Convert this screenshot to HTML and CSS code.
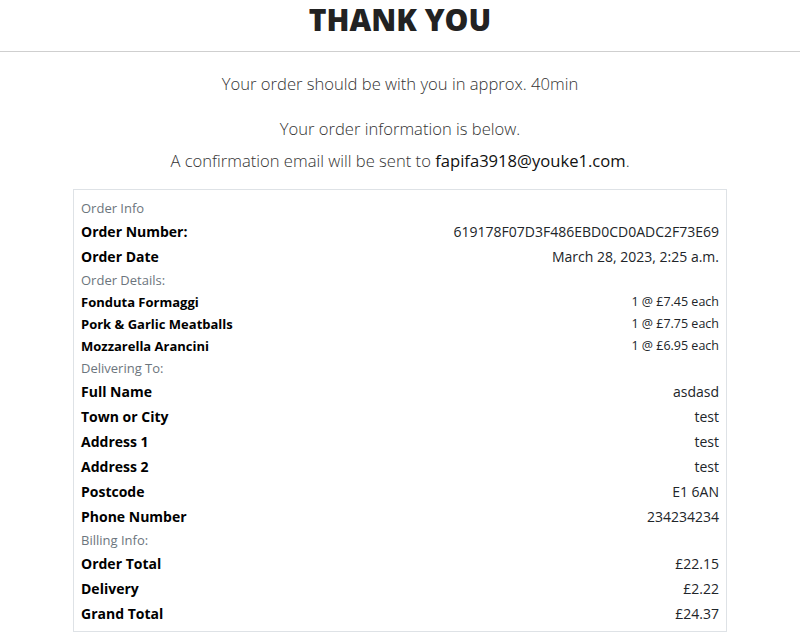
FILE: index.html
```
<!DOCTYPE html>
<html lang="en">
<head>
<meta charset="utf-8">
<title>Thank You</title>
<link rel="stylesheet" href="styles.css">
</head>
<body>
<header class="page-header">
  <h1 class="title">THANK YOU</h1>
</header>
<main class="content">
  <p class="eta">Your order should be with you in approx. 40min</p>
  <div class="info">
    <p>Your order information is below.</p>
    <p>A confirmation email will be sent to <strong class="email">fapifa3918@youke1.com</strong>.</p>
  </div>
  <section class="summary">
    <div class="section-label">Order Info</div>
    <div class="row"><span class="key">Order Number:</span><span class="val">619178F07D3F486EBD0CD0ADC2F73E69</span></div>
    <div class="row"><span class="key">Order Date</span><span class="val">March 28, 2023, 2:25 a.m.</span></div>
    <div class="section-label">Order Details:</div>
    <div class="row item"><span class="key">Fonduta Formaggi</span><span class="val">1 @ £7.45 each</span></div>
    <div class="row item"><span class="key">Pork &amp; Garlic Meatballs</span><span class="val">1 @ £7.75 each</span></div>
    <div class="row item"><span class="key">Mozzarella Arancini</span><span class="val">1 @ £6.95 each</span></div>
    <div class="section-label">Delivering To:</div>
    <div class="row"><span class="key">Full Name</span><span class="val">asdasd</span></div>
    <div class="row"><span class="key">Town or City</span><span class="val">test</span></div>
    <div class="row"><span class="key">Address 1</span><span class="val">test</span></div>
    <div class="row"><span class="key">Address 2</span><span class="val">test</span></div>
    <div class="row"><span class="key">Postcode</span><span class="val">E1 6AN</span></div>
    <div class="row"><span class="key">Phone Number</span><span class="val">234234234</span></div>
    <div class="section-label">Billing Info:</div>
    <div class="row"><span class="key">Order Total</span><span class="val">£22.15</span></div>
    <div class="row"><span class="key">Delivery</span><span class="val">£2.22</span></div>
    <div class="row"><span class="key">Grand Total</span><span class="val">£24.37</span></div>
  </section>
</main>
</body>
</html>
```
FILE: styles.css
```
* { box-sizing: border-box; }
body {
  margin: 0;
  font-family: "Open Sans", "Liberation Sans", sans-serif;
  color: #212529;
  background: #fff;
}
.page-header {
  border-bottom: 1px solid #cfcfcf;
  padding-bottom: 11px;
}
.title {
  margin: 0;
  text-align: center;
  font-family: "Open Sans", sans-serif;
  font-weight: 800;
  font-size: 30px;
  line-height: 40px;
  color: #222;
}
.content {
  text-align: center;
}
.eta {
  margin: 18px 0 0;
  font-size: 16.6px;
  font-weight: 300;
  line-height: 27px;
  color: #333;
}
.info {
  margin-top: 16px;
  font-size: 16.6px;
  font-weight: 300;
  line-height: 31.5px;
  color: #333;
}
.info p { margin: 0; }
.email {
  font-weight: 400;
  color: #111;
}
.summary {
  width: 654px;
  margin: 13px auto 0;
  border: 1px solid #dee2e6;
  padding: 7px 7px 5px 7px;
  text-align: left;
}
.section-label {
  font-size: 13px;
  line-height: 22px;
  color: #6c757d;
}
.row {
  display: flex;
  justify-content: space-between;
  font-size: 14px;
  line-height: 25px;
}
.key {
  font-weight: 700;
  color: #000;
}
.val {
  color: #212529;
}
.item {
  font-size: 13px;
  line-height: 22px;
}
.item .val { font-size: 12.5px; }
```
